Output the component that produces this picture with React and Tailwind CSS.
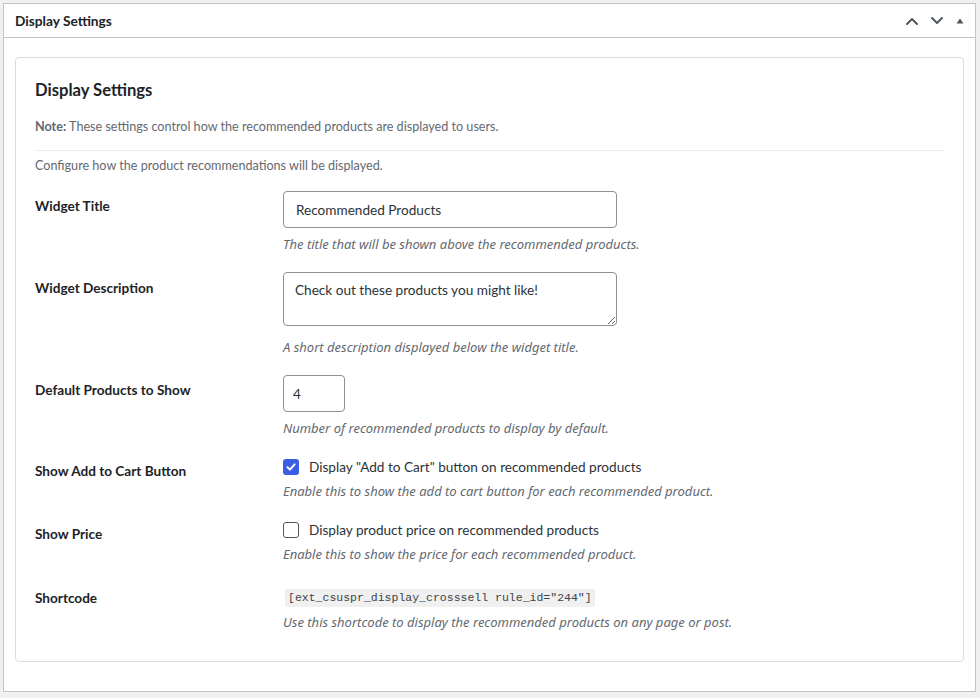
import { useState } from "react";

const font = { fontFamily: 'Lato, "Noto Sans", sans-serif' };
const italicFont = { fontFamily: '"Noto Sans", sans-serif' };

function Chevron({ up }) {
  return (
    <svg width="14" height="10" viewBox="0 0 14 10" fill="none">
      <path
        d={up ? "M2 8 L7 3 L12 8" : "M2 2 L7 7 L12 2"}
        stroke="#50575e"
        strokeWidth="2"
        strokeLinecap="round"
        strokeLinejoin="round"
      />
    </svg>
  );
}

function Check({ checked, onChange }) {
  return (
    <span
      onClick={onChange}
      className={
        "inline-flex w-4 h-4 items-center justify-center rounded-[3px] shrink-0 " +
        (checked ? "bg-[#3b5ce4]" : "border border-[#50575e] bg-white")
      }
    >
      {checked && (
        <svg width="12" height="12" viewBox="0 0 12 12" fill="none">
          <path d="M2.5 6.2 L5 8.6 L9.6 3.4" stroke="#fff" strokeWidth="2" strokeLinecap="round" strokeLinejoin="round" />
        </svg>
      )}
    </span>
  );
}

function Desc({ children, className = "" }) {
  return (
    <p className={"text-[13px] leading-[18px] italic text-[#646970] " + className} style={italicFont}>
      {children}
    </p>
  );
}

function Label({ children, className = "" }) {
  return (
    <div className={"w-[248px] shrink-0 text-[13.6px] leading-[18px] font-bold text-[#1d2327] " + className}>
      {children}
    </div>
  );
}

function App() {
  const [title, setTitle] = useState("Recommended Products");
  const [desc, setDesc] = useState("Check out these products you might like!");
  const [count, setCount] = useState("4");
  const [cart, setCart] = useState(true);
  const [price, setPrice] = useState(false);

  return (
    <div className="min-h-[698px] bg-[#f0f0f1] pt-[3px] pl-[3px] pr-[4px] pb-[6px]" style={font}>
      <div className="bg-white border border-[#c3c4c7]">
        <div className="flex items-center justify-between h-[34px] border-b border-[#c3c4c7] pl-[11px] pr-[10px]">
          <h2 className="pt-[2px] text-[13.7px] font-bold text-[#1d2327]">Display Settings</h2>
          <div className="flex items-center gap-[11px] pt-[1px]">
            <Chevron up />
            <Chevron />
            <svg width="10" height="10" viewBox="0 0 10 10">
              <path d="M1.5 7.5 L5 2.5 L8.5 7.5 Z" fill="#50575e" />
            </svg>
          </div>
        </div>

        <div className="px-[11px] pt-[19px] pb-[29px]">
          <div className="border border-[#dcdcde] rounded-[4px] px-[19px] pt-[20px] pb-[30px]">
            <h3 className="text-[16.6px] leading-[24px] font-bold text-[#1d2327]">Display Settings</h3>
            <p className="mt-[16px] text-[12.6px] leading-[18px] text-[#646970]">
              <strong className="font-bold">Note:</strong> These settings control how the recommended products are displayed to users.
            </p>
            <hr className="mt-[14px] border-0 border-t border-[#ececec]" />
            <p className="mt-[6px] text-[12.6px] leading-[18px] text-[#646970]">
              Configure how the product recommendations will be displayed.
            </p>

            <div className="mt-[16px] flex items-start">
              <Label className="pt-[6px]">Widget Title</Label>
              <div>
                <input
                  type="text"
                  value={title}
                  onChange={(e) => setTitle(e.target.value)}
                  className="block w-[334px] h-[37px] border border-[#8c8f94] rounded-[4px] px-[12px] text-[13.6px] text-[#2c3338] outline-none"
                />
                <Desc className="mt-[7px]">The title that will be shown above the recommended products.</Desc>
              </div>
            </div>

            <div className="mt-[19px] flex items-start">
              <Label className="pt-[7px]">Widget Description</Label>
              <div>
                <textarea
                  value={desc}
                  onChange={(e) => setDesc(e.target.value)}
                  className="block w-[334px] h-[54px] border border-[#8c8f94] rounded-[4px] px-[11px] py-[8px] text-[13.6px] leading-[18px] text-[#2c3338] outline-none"
                />
                <Desc className="mt-[12px]">A short description displayed below the widget title.</Desc>
              </div>
            </div>

            <div className="mt-[19px] flex items-start">
              <Label className="pt-[6px]">Default Products to Show</Label>
              <div>
                <input
                  type="text"
                  value={count}
                  onChange={(e) => setCount(e.target.value)}
                  className="block w-[62px] h-[37px] border border-[#8c8f94] rounded-[4px] px-[9px] text-[13.6px] text-[#2c3338] outline-none"
                />
                <Desc className="mt-[7px]">Number of recommended products to display by default.</Desc>
              </div>
            </div>

            <div className="mt-[20px] flex items-start">
              <Label className="pt-[5px]">Show Add to Cart Button</Label>
              <div>
                <label className="flex items-center gap-[10px] h-[20px] text-[13.6px] text-[#2c3338]">
                  <Check checked={cart} onChange={() => setCart(!cart)} />
                  Display "Add to Cart" button on recommended products
                </label>
                <Desc className="mt-[5px]">Enable this to show the add to cart button for each recommended product.</Desc>
              </div>
            </div>

            <div className="mt-[20px] flex items-start">
              <Label className="pt-[5px]">Show Price</Label>
              <div>
                <label className="flex items-center gap-[10px] h-[20px] text-[13.6px] text-[#2c3338]">
                  <Check checked={price} onChange={() => setPrice(!price)} />
                  Display product price on recommended products
                </label>
                <Desc className="mt-[5px]">Enable this to show the price for each recommended product.</Desc>
              </div>
            </div>

            <div className="mt-[20px] flex items-start">
              <Label className="pt-[6px]">Shortcode</Label>
              <div>
                <code
                  className="ml-[2px] inline-block bg-[#f0f0f1] px-[3px] py-[1px] text-[11.5px] leading-[16px] text-[#3c434a]"
                  style={{ fontFamily: '"Liberation Mono", monospace' }}
                >
                  [ext_csuspr_display_crosssell rule_id="244"]
                </code>
                <Desc className="mt-[6px]">Use this shortcode to display the recommended products on any page or post.</Desc>
              </div>
            </div>
          </div>
        </div>
      </div>
    </div>
  );
}

export default App;
